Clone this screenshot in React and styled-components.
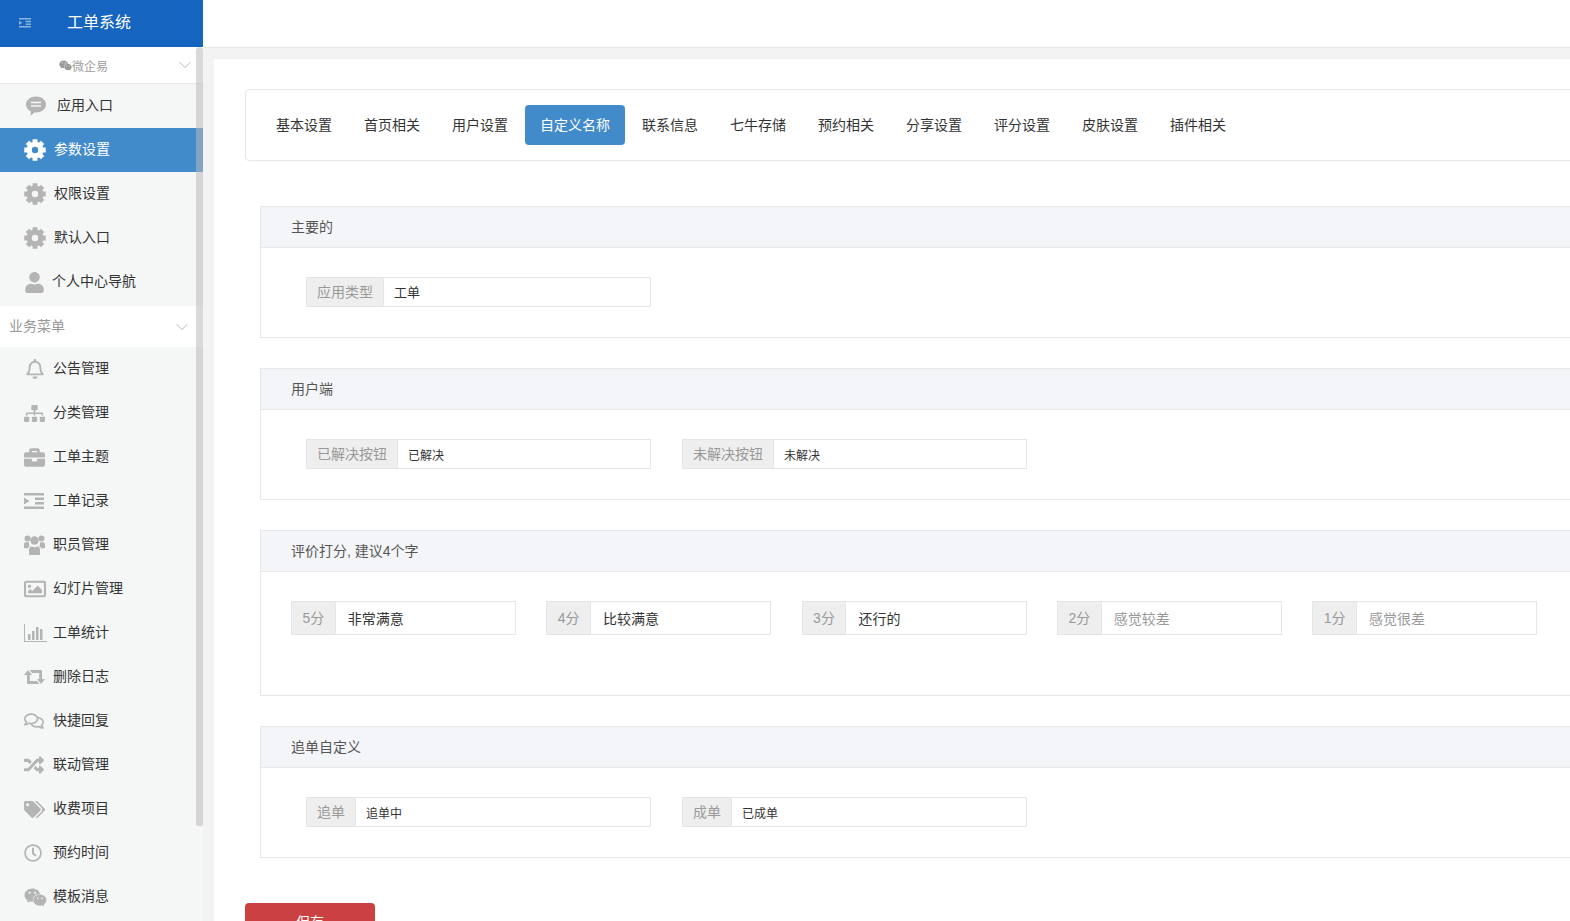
import React from 'react'
import styled, { createGlobalStyle } from 'styled-components'
import {
  FaWeixin, FaUser, FaRegBell, FaSitemap, FaBriefcase, FaRegImage,
  FaRegComments, FaRandom, FaTags, FaRegClock
} from 'react-icons/fa'
import { LuChevronDown } from 'react-icons/lu'

const GlobalStyle = createGlobalStyle`
  * { box-sizing: border-box; }
  html, body { margin: 0; height: 100%; overflow: hidden; }
  body {
    font-family: "Liberation Sans", "Noto Sans CJK SC", sans-serif;
    font-size: 14px;
    color: #333;
    background: #f3f3f3;
  }
`

const Page = styled.div`
  display: flex;
  width: 1570px;
  height: 921px;
  overflow: hidden;
`

const Sidebar = styled.aside`
  position: relative;
  flex: 0 0 203px;
  height: 921px;
  overflow: hidden;
  background: #f5f7f7;
`

const Brand = styled.div`
  display: flex;
  align-items: center;
  height: 47px;
  padding: 0 0 1px 19px;
  background: #1565c0;
  color: #fff;
  font-size: 16px;
  line-height: 22px;
  svg { color: #8fb3dc; font-size: 12px; margin-right: 36px; }
`

const AccountRow = styled.div`
  position: relative;
  display: flex;
  align-items: center;
  justify-content: center;
  height: 37px;
  padding-right: 36px;
  background: #fff;
  border-bottom: 1px solid #e7e7e7;
  color: #a0a0a0;
  font-size: 12px;
  svg.wx { font-size: 13px; color: #999; }
`

const Chevron = styled(LuChevronDown)`
  position: absolute;
  right: ${p => p.$right}px;
  top: 50%;
  transform: translateY(-50%);
  color: #a8a8a8;
  font-size: 20px;
  stroke-width: 1;
`

const MenuList = styled.ul`
  list-style: none;
  margin: 0;
  padding: 0 0 ${p => p.$bottom || 0}px;
`

const MenuItem = styled.li`
  display: flex;
  align-items: center;
  height: 44px;
  padding-left: 24px;
  background: ${p => (p.$active ? '#428bca' : 'transparent')};
  color: ${p => (p.$active ? '#fff' : '#333')};
`

const MenuIcon = styled.span`
  display: flex;
  align-items: center;
  flex: 0 0 ${p => p.$w}px;
  padding-left: ${p => p.$pad || 0}px;
  color: ${p => (p.$active ? '#fff' : '#b4b4b4')};
  font-size: ${p => p.$size}px;
`

const MenuLabel = styled.span`
  line-height: 20px;
  margin-bottom: 2px;
`

const GroupRow = styled.div`
  position: relative;
  display: flex;
  align-items: center;
  height: 41px;
  padding: 0 0 2px 9px;
  line-height: 20px;
  background: #fff;
  color: #999;
`

const ScrollThumb = styled.div`
  position: absolute;
  top: 47px;
  right: 0;
  width: 7px;
  height: 779px;
  border-radius: 4px 4px 3px 3px;
  background: rgba(185, 185, 185, 0.55);
`

const Main = styled.main`
  flex: 1;
  min-width: 0;
  display: flex;
  flex-direction: column;
`

const TopBar = styled.div`
  flex: 0 0 48px;
  background: #fff;
  border-bottom: 1px solid #e7e7e7;
`

const Panel = styled.div`
  width: 1500px;
  margin: 10px 0 0 11px;
  padding: 30px 0 0 31px;
  background: #fff;
  flex: 1;
  border-top: 1px solid #eee;
`

const TabBar = styled.nav`
  display: flex;
  gap: 2px;
  height: 72px;
  padding: 15px;
  border: 1px solid #e7e7e7;
  border-radius: 4px;
`

const Tab = styled.a`
  height: 40px;
  padding: 0 15px;
  line-height: 40px;
  border-radius: 4px;
  color: ${p => (p.$active ? '#fff' : '#333')};
  background: ${p => (p.$active ? '#428bca' : 'transparent')};
`

const Section = styled.section`
  margin: ${p => p.$top}px 0 0 15px;
  height: ${p => p.$height}px;
  border: 1px solid #e7e7e7;
  border-right: 0;
`

const SectionHead = styled.div`
  height: 41px;
  padding-left: 30px;
  line-height: 40px;
  background: #f4f5f9;
  border-bottom: 1px solid #e7e7e7;
  color: #555;
`

const FieldRow = styled.div`
  display: flex;
  gap: ${p => p.$gap}px;
  padding: 29px 0 0 ${p => p.$left}px;
`

const Field = styled.div`
  display: flex;
  flex: 0 0 ${p => p.$width}px;
  height: ${p => p.$height}px;
  border: 1px solid #e5e6e7;
`

const FieldLabel = styled.span`
  padding: 0 ${p => p.$pad}px;
  line-height: ${p => p.$height - 2}px;
  background: #eee;
  border-right: 1px solid #e5e6e7;
  color: #999;
  white-space: nowrap;
`

const FieldValue = styled.div`
  flex: 1;
  padding-left: ${p => p.$pad}px;
  line-height: ${p => p.$height + p.$shift}px;
  font-size: ${p => p.$font}px;
  color: ${p => (p.$muted ? '#999' : '#333')};
`

const SaveButton = styled.button`
  display: block;
  width: 130px;
  height: 36px;
  margin-top: 45px;
  border: 0;
  border-radius: 4px;
  background: #cb4141;
  color: #fff;
  font: inherit;
`

// FA4 style eight tooth cog, computed so the teeth stay even
const cogPath = (() => {
  const pt = (r, a) => `${(12 + r * Math.cos(a)).toFixed(2)} ${(12 + r * Math.sin(a)).toFixed(2)}`
  let d = ''
  for (let i = 0; i < 8; i++) {
    const a = (i * Math.PI) / 4 - Math.PI / 2
    d += `${i ? 'L' : 'M'}${pt(9.2, a - 0.3)}L${pt(12, a - 0.22)}L${pt(12, a + 0.22)}L${pt(9.2, a + 0.3)}`
  }
  return `${d}Z M12 8.500a3.500 3.500 0 1 0 0 7a3.500 3.500 0 1 0 0-7Z`
})()

const CogIcon = () => (
  <svg width="1em" height="1em" viewBox="0 0 24 24" fill="currentColor">
    <path fillRule="evenodd" d={cogPath} />
  </svg>
)

const BubbleIcon = () => (
  <svg width="20" height="20" viewBox="0 0 20 20">
    <path fill="#b4b4b4" d="M10 0.500c5.500 0 10 3.400 10 8s-4.500 8-10 8c-.6 0-1.200 0-1.700-.1C7 17.800 5.500 19 3.900 19.500c.6-1.100.9-2.300.9-4C2 14 0 11.500 0 8.500c0-4.600 4.500-8 10-8z" />
    <path stroke="#f5f7f7" strokeWidth="1.400" d="M5 6.500h10M5 10h10" />
  </svg>
)

const ChartIcon = () => (
  <svg width="23" height="18" viewBox="0 0 23 18" fill="#b4b4b4">
    <path d="M0 0h1v17h22v1H0z" />
    <path d="M4 10h2.500v6H4zM8 7h2.500v9H8zM12 3h2.500v13H12zM16 5h2.500v11H16z" />
  </svg>
)

const IndentIcon = () => (
  <svg width="1em" height="0.8em" viewBox="0 0 20 16" fill="currentColor">
    <path d="M0 0h20v2.600H0zM11 4.400h9v2.600h-9zM11 9h9v2.600h-9zM0 13.400h20V16H0zM0 4.600l5.500 3.400L0 11.400z" />
  </svg>
)

const RetweetIcon = () => (
  <svg width="21" height="14" viewBox="0 0 21 14" fill="#b4b4b4">
    <path d="M4 0l4 5H5.800v6H13l2.200 3H4q-1 0-1-1V5H0zM17 14l-4-5h2.200V3H8L5.800 0H17q1 0 1 1v8h3z" />
  </svg>
)

const StaffIcon = () => (
  <svg width="21" height="20" viewBox="0 0 21 20" fill="#b4b4b4">
    <circle cx="3.500" cy="3.500" r="3" />
    <circle cx="17.500" cy="3.500" r="3" />
    <circle cx="10.500" cy="5.500" r="4.200" />
    <path d="M0 13V9q0-1.800 2-1.800h3Q4.700 10 5.800 11.200 3.800 12 3.800 13.500zM21 13V9q0-1.800-2-1.800h-3q.3 2.800-.8 4 2 .8 2 2.300z" />
    <path d="M5 20v-5q0-3.400 3-3.400 2.500 1.400 5 0 3 0 3 3.400v5q-5.500 0-11 0z" />
  </svg>
)

const mainMenu = [
  { name: '应用入口', icon: <BubbleIcon />, w: 33, size: 20, pad: 2 },
  { name: '参数设置', icon: <CogIcon />, w: 30, size: 22, active: true },
  { name: '权限设置', icon: <CogIcon />, w: 30, size: 22 },
  { name: '默认入口', icon: <CogIcon />, w: 30, size: 22 },
  { name: '个人中心导航', icon: <FaUser />, w: 28, size: 21 }
]

const bizMenu = [
  { name: '公告管理', icon: <FaRegBell />, w: 29, size: 20, pad: 1 },
  { name: '分类管理', icon: <FaSitemap />, w: 29, size: 21 },
  { name: '工单主题', icon: <FaBriefcase />, w: 29, size: 21 },
  { name: '工单记录', icon: <IndentIcon />, w: 29, size: 20 },
  { name: '职员管理', icon: <StaffIcon />, w: 29, size: 21 },
  { name: '幻灯片管理', icon: <FaRegImage />, w: 29, size: 22 },
  { name: '工单统计', icon: <ChartIcon />, w: 29, size: 20 },
  { name: '删除日志', icon: <RetweetIcon />, w: 29, size: 21 },
  { name: '快捷回复', icon: <FaRegComments />, w: 29, size: 20 },
  { name: '联动管理', icon: <FaRandom />, w: 29, size: 20 },
  { name: '收费项目', icon: <FaTags />, w: 29, size: 21 },
  { name: '预约时间', icon: <FaRegClock />, w: 29, size: 18 },
  { name: '模板消息', icon: <FaWeixin />, w: 29, size: 23 }
]

const tabs = ['基本设置', '首页相关', '用户设置', '自定义名称', '联系信息', '七牛存储', '预约相关', '分享设置', '评分设置', '皮肤设置', '插件相关']

const scores = [
  { label: '5分', value: '非常满意' },
  { label: '4分', value: '比较满意' },
  { label: '3分', value: '还行的' },
  { label: '2分', value: '感觉较差', muted: true },
  { label: '1分', value: '感觉很差', muted: true }
]

const Menu = ({ items, bottom }) => (
  <MenuList $bottom={bottom}>
    {items.map(item => (
      <MenuItem key={item.name} $active={item.active}>
        <MenuIcon $w={item.w} $size={item.size} $pad={item.pad} $active={item.active}>{item.icon}</MenuIcon>
        <MenuLabel>{item.name}</MenuLabel>
      </MenuItem>
    ))}
  </MenuList>
)

const InputField = ({ label, value, width = 345, height = 30, pad = 10, valuePad = 10, font = 14, shift = 1, muted }) => (
  <Field $width={width} $height={height}>
    <FieldLabel $pad={pad} $height={height}>{label}</FieldLabel>
    <FieldValue $pad={valuePad} $height={height} $font={font} $shift={shift} $muted={muted}>{value}</FieldValue>
  </Field>
)

const App = () => (
  <Page>
    <GlobalStyle />
    <Sidebar>
      <Brand><IndentIcon />工单系统</Brand>
      <AccountRow>
        <FaWeixin className="wx" />微企易
        <Chevron $right={8} />
      </AccountRow>
      <Menu items={mainMenu} bottom={2} />
      <GroupRow>业务菜单<Chevron $right={11} /></GroupRow>
      <Menu items={bizMenu} />
      <ScrollThumb />
    </Sidebar>
    <Main>
      <TopBar />
      <Panel>
        <TabBar>
          {tabs.map(tab => (
            <Tab key={tab} $active={tab === '自定义名称'}>{tab}</Tab>
          ))}
        </TabBar>
        <Section $top={45} $height={132}>
          <SectionHead>主要的</SectionHead>
          <FieldRow $left={45} $gap={31}>
            <InputField label="应用类型" value="工单" font={13} shift={-1} />
          </FieldRow>
        </Section>
        <Section $top={30} $height={132}>
          <SectionHead>用户端</SectionHead>
          <FieldRow $left={45} $gap={31}>
            <InputField label="已解决按钮" value="已解决" font={12} shift={3} />
            <InputField label="未解决按钮" value="未解决" font={12} shift={3} />
          </FieldRow>
        </Section>
        <Section $top={30} $height={166}>
          <SectionHead>评价打分, 建议4个字</SectionHead>
          <FieldRow $left={30} $gap={30.3}>
            {scores.map(s => (
              <InputField key={s.label} label={s.label} value={s.value} muted={s.muted} width={225} height={34} pad={10.5} valuePad={12} />
            ))}
          </FieldRow>
        </Section>
        <Section $top={30} $height={132}>
          <SectionHead>追单自定义</SectionHead>
          <FieldRow $left={45} $gap={31}>
            <InputField label="追单" value="追单中" font={12} shift={3} />
            <InputField label="成单" value="已成单" font={12} shift={3} />
          </FieldRow>
        </Section>
        <SaveButton>保存</SaveButton>
      </Panel>
    </Main>
  </Page>
)

export default App
